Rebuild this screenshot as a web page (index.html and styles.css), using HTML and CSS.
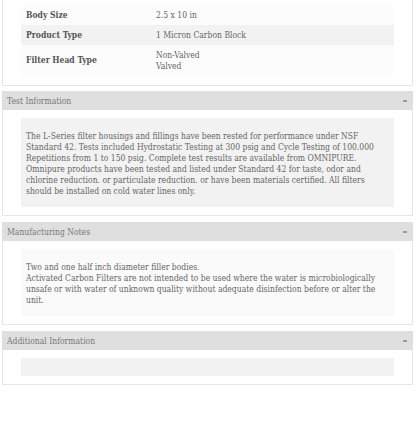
FILE: index.html
```html
<!DOCTYPE html>
<html lang="en">
<head>
  <meta charset="UTF-8" />
  <meta name="viewport" content="width=device-width, initial-scale=1.0"/>
  <title>Product Details</title>
  <link rel="stylesheet" href="styles.css">
</head>
<body>
  <div class="panel specs-panel">
    <table class="specs">
      <tr>
        <th>Body Size</th>
        <td>2.5 x 10 in</td>
      </tr>
      <tr class="alt">
        <th>Product Type</th>
        <td>1 Micron Carbon Block</td>
      </tr>
      <tr>
        <th>Filter Head Type</th>
        <td>Non-Valved<br>Valved</td>
      </tr>
    </table>
  </div>

  <div class="tab">
    <div class="tab-head">
      <span>Test Information</span>
      <span class="toggle"></span>
    </div>
    <div class="panel">
      <div class="box">
        The L-Series filter housings and fillings have been rested for performance under NSF Standard 42. Tests included Hydrostatic Testing at 300 psig and Cycle Testing of 100.000 Repetitions from 1 to 150 psig. Complete test results are available from OMNIPURE. Omnipure products have been tested and listed under Standard 42 for taste, odor and chlorine reduction. or particulate reduction. or have been materials certified. All filters should be installed on cold water lines only.
      </div>
    </div>
  </div>

  <div class="tab">
    <div class="tab-head">
      <span>Manufacturing Notes</span>
      <span class="toggle"></span>
    </div>
    <div class="panel">
      <div class="box light">
        Two and one half inch diameter filler bodies.<br>
        Activated Carbon Filters are not intended to be used where the water is microbiologically unsafe or with water of unknown quality without adequate disinfection before or alter the unit.
      </div>
    </div>
  </div>

  <div class="tab">
    <div class="tab-head">
      <span>Additional Information</span>
      <span class="toggle"></span>
    </div>
    <div class="panel">
      <div class="box empty"></div>
    </div>
  </div>
</body>
</html>
```

FILE: styles.css
```css
* {
  box-sizing: border-box;
}

body {
  margin: 0;
  padding: 0 3px 0 2px;
  font-family: 'DejaVu Serif Condensed', 'Liberation Serif', serif;
  color: #666;
  background: #fff;
}

.panel {
  border: 1px solid #e6e6e6;
  border-top: none;
  padding: 8px 18px;
}

.specs-panel {
  padding: 5px 18px 9px;
}

.specs {
  width: 100%;
  border-collapse: collapse;
  font-size: 8.5px;
}

.specs tr {
  background: #fcfcfc;
}

.specs tr.alt {
  background: #f2f2f2;
}

.specs th,
.specs td {
  text-align: left;
  vertical-align: middle;
  padding: 4.5px 5px;
  line-height: 11px;
}

.specs th {
  width: 130px;
  font-weight: bold;
  color: #555;
}

.specs td {
  color: #666;
}

.tab {
  margin-top: 5px;
}

.tab + .tab {
  margin-top: 6px;
}

.tab-head {
  display: flex;
  justify-content: space-between;
  align-items: center;
  height: 19px;
  padding: 0 6px 0 5px;
  background: #dfdfdf;
  color: #777;
  font-size: 8.5px;
}

/* small minus mark on the right of each bar */
.toggle {
  width: 4px;
  height: 2px;
  background: #999;
}

.box {
  background: #f2f2f2;
  padding: 13px 5px 10px;
  font-size: 8.5px;
  line-height: 11px;
  color: #666;
}

.box.light {
  background: #fafafa;
}

.box.empty {
  height: 18px;
  padding: 0;
}
```
